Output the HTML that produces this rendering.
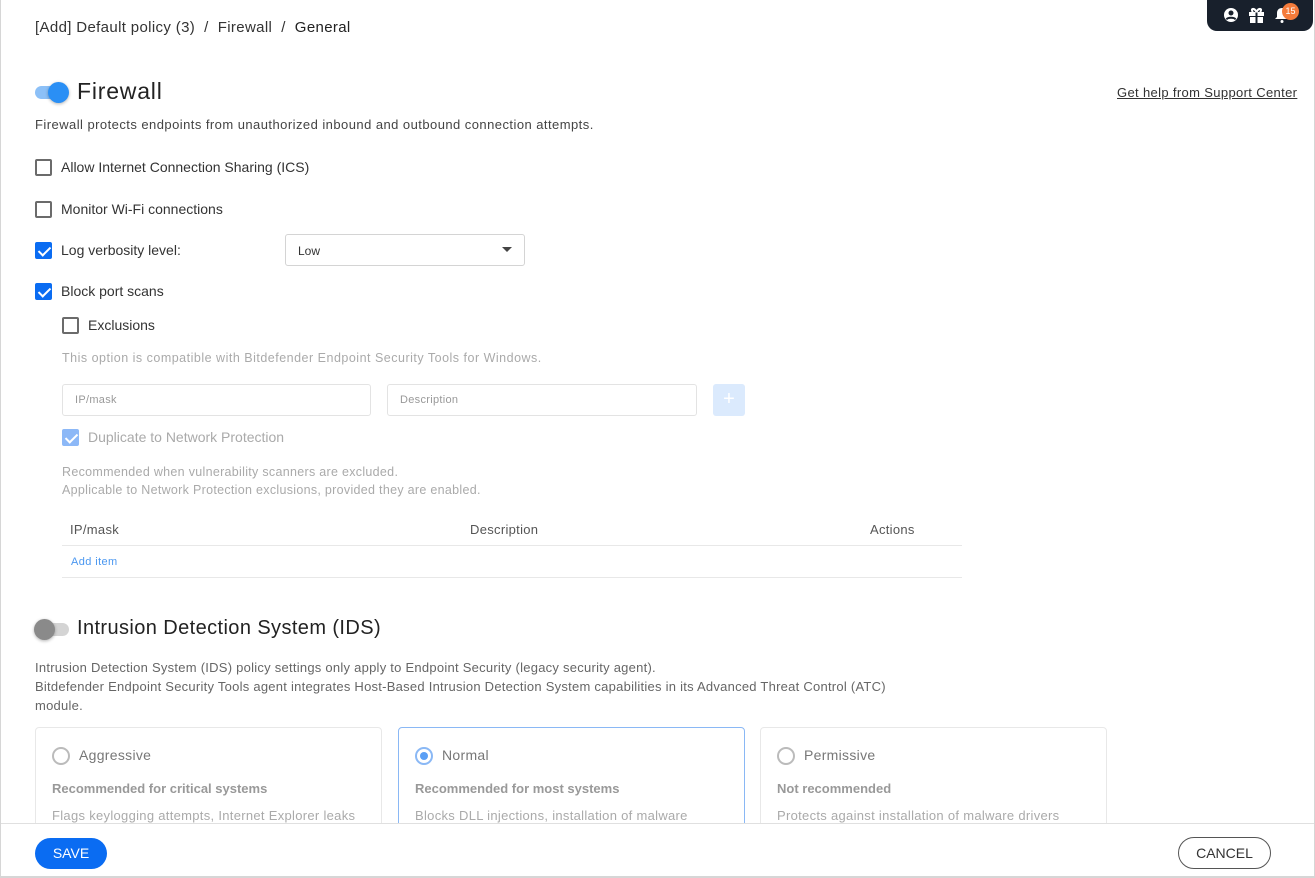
<!DOCTYPE html>
<html><head><meta charset="utf-8"><style>
*{box-sizing:border-box;margin:0;padding:0}
body{width:1315px;height:878px;overflow:hidden;background:#fff;font-family:"Liberation Sans",sans-serif;color:#333;position:relative}
.a{position:absolute;white-space:nowrap}
.frame{position:absolute;left:0;top:0;width:1315px;height:878px;border:1px solid #d6d6d6;border-top:none}
.cb{position:absolute;width:17px;height:17px;border:2px solid #6b6b6b;border-radius:2px;background:#fff}
.cb.on{background:#0a6cf2;border-color:#0a6cf2}
.cb.on::after{content:"";position:absolute;left:4px;top:0px;width:5px;height:10px;border:solid #fff;border-width:0 2px 2px 0;transform:rotate(45deg)}
.cb.dis{background:#8cb8f7;border-color:#8cb8f7}
.t14{font-size:14px;color:#333}
.g{font-size:12.5px;color:#aaa;letter-spacing:.5px}
.inp{position:absolute;height:32px;border:1px solid #e3e3e3;border-radius:3px;font-size:11px;color:#999;padding:9px 12px;letter-spacing:.3px}
.card{position:absolute;top:727px;width:347px;height:100px;border:1px solid #e8e8e8;border-radius:4px;overflow:hidden}
.rad{position:absolute;left:16px;top:19px;width:18px;height:18px;border:2px solid #bbb;border-radius:50%}
</style></head><body>
<div class="frame"></div>
<div class="a" style="left:35px;top:19px;font-size:15px;color:#333;letter-spacing:.35px">[Add] Default policy (3)&nbsp; /&nbsp; Firewall&nbsp; /&nbsp; <span style="color:#222">General</span></div>
<div class="a" style="left:1207px;top:0;width:106px;height:31px;background:#18202c;border-radius:0 0 10px 10px"></div>
<svg class="a" style="left:1223px;top:7px" width="16" height="16" viewBox="0 0 16 16"><circle cx="8" cy="8" r="7" fill="#fff"/><circle cx="8" cy="6" r="2.5" fill="#18202c"/><path d="M3.5 12.5c1-2.3 8-2.3 9 0" stroke="#18202c" stroke-width="2" fill="none"/></svg>
<svg class="a" style="left:1248px;top:7px" width="17" height="16" viewBox="0 0 17 16"><rect x="1" y="5" width="15" height="4" fill="#fff"/><rect x="2" y="10" width="13" height="6" fill="#fff"/><rect x="7.5" y="5" width="2" height="11" fill="#18202c"/><path d="M8.5 5C6 0 2 2 5 5M8.5 5c2.5-5 6.5-3 3.5 0" stroke="#fff" stroke-width="2" fill="none"/></svg>
<svg class="a" style="left:1275px;top:7px" width="14" height="16" viewBox="0 0 14 16"><path d="M7 1c3 0 5 2 5 5v4l2 2H0l2-2V6c0-3 2-5 5-5z" fill="#fff"/><circle cx="7" cy="14.5" r="1.5" fill="#fff"/></svg>
<div class="a" style="left:1282px;top:3px;width:17px;height:17px;border-radius:50%;background:#f47b3b;color:#fff;font-size:9px;text-align:center;line-height:17px">15</div>

<div class="a" style="left:35px;top:86px;width:33px;height:13px;border-radius:7px;background:#8cc0f7"></div>
<div class="a" style="left:48px;top:82px;width:21px;height:21px;border-radius:50%;background:#2a8ff5;box-shadow:0 1px 3px rgba(0,0,0,.3)"></div>
<div class="a" style="left:77px;top:78px;font-size:23px;color:#222;letter-spacing:.8px">Firewall</div>
<div class="a" style="left:1117px;top:85px;font-size:13px;color:#333;text-decoration:underline;letter-spacing:.35px">Get help from Support Center</div>
<div class="a" style="left:35px;top:117px;font-size:13px;color:#444;letter-spacing:.45px">Firewall protects endpoints from unauthorized inbound and outbound connection attempts.</div>

<div class="cb" style="left:35px;top:159px"></div><div class="a t14" style="left:61px;top:159px">Allow Internet Connection Sharing (ICS)</div>
<div class="cb" style="left:35px;top:201px"></div><div class="a t14" style="left:61px;top:201px">Monitor Wi-Fi connections</div>
<div class="cb on" style="left:35px;top:242px"></div><div class="a t14" style="left:61px;top:242px">Log verbosity level:</div>
<div class="a" style="left:285px;top:234px;width:240px;height:32px;border:1px solid #d4d4d4;border-radius:3px;font-size:12px;color:#333;padding:9px 12px">Low</div>
<div class="a" style="left:502px;top:247px;border:5px solid transparent;border-top:5px solid #444"></div>
<div class="cb on" style="left:35px;top:283px"></div><div class="a t14" style="left:61px;top:283px">Block port scans</div>
<div class="cb" style="left:62px;top:317px"></div><div class="a t14" style="left:88px;top:317px">Exclusions</div>
<div class="a g" style="left:62px;top:351px">This option is compatible with Bitdefender Endpoint Security Tools for Windows.</div>
<div class="inp" style="left:62px;top:384px;width:309px">IP/mask</div>
<div class="inp" style="left:387px;top:384px;width:310px">Description</div>
<div class="a" style="left:713px;top:384px;width:32px;height:32px;background:#dbeafd;border-radius:3px;color:#fff;font-size:20px;text-align:center;line-height:31px">+</div>
<div class="cb on dis" style="left:62px;top:429px"></div><div class="a" style="left:88px;top:429px;font-size:14px;color:#aaa">Duplicate to Network Protection</div>
<div class="a g" style="left:62px;top:463px;line-height:18px;letter-spacing:.3px">Recommended when vulnerability scanners are excluded.<br>Applicable to Network Protection exclusions, provided they are enabled.</div>
<div class="a" style="left:70px;top:522px;font-size:13px;color:#555;letter-spacing:.3px">IP/mask</div>
<div class="a" style="left:470px;top:522px;font-size:13px;color:#555;letter-spacing:.3px">Description</div>
<div class="a" style="left:870px;top:522px;font-size:13px;color:#555;letter-spacing:.3px">Actions</div>
<div class="a" style="left:62px;top:545px;width:900px;height:1px;background:#e8e8e8"></div>
<div class="a" style="left:71px;top:556px;font-size:11px;color:#4a97f0;letter-spacing:.4px">Add item</div>
<div class="a" style="left:62px;top:577px;width:900px;height:1px;background:#e8e8e8"></div>

<div class="a" style="left:35px;top:623px;width:34px;height:13px;border-radius:7px;background:#d4d4d4"></div>
<div class="a" style="left:34px;top:619px;width:21px;height:21px;border-radius:50%;background:#8a8a8a;box-shadow:0 1px 3px rgba(0,0,0,.3)"></div>
<div class="a" style="left:77px;top:617px;font-size:20px;color:#222;letter-spacing:.4px">Intrusion Detection System (IDS)</div>
<div class="a" style="left:35px;top:658px;font-size:13px;color:#666;line-height:19px;letter-spacing:.25px">Intrusion Detection System (IDS) policy settings only apply to Endpoint Security (legacy security agent).<br>Bitdefender Endpoint Security Tools agent integrates Host-Based Intrusion Detection System capabilities in its Advanced Threat Control (ATC)<br>module.</div>

<div class="card" style="left:35px"><div class="rad"></div><div class="a" style="left:43px;top:19px;font-size:14px;color:#777;letter-spacing:.3px">Aggressive</div><div class="a" style="left:16px;top:53px;font-size:13px;font-weight:bold;color:#999">Recommended for critical systems</div><div class="a" style="left:16px;top:80px;font-size:13px;color:#aaa;letter-spacing:.3px">Flags keylogging attempts, Internet Explorer leaks</div></div>
<div class="card" style="left:398px;border-color:#8ab8f5"><div class="rad" style="border-color:#8ab8f5"><div style="position:absolute;left:3px;top:3px;width:8px;height:8px;border-radius:50%;background:#5a9ff5"></div></div><div class="a" style="left:43px;top:19px;font-size:14px;color:#777;letter-spacing:.3px">Normal</div><div class="a" style="left:16px;top:53px;font-size:13px;font-weight:bold;color:#999">Recommended for most systems</div><div class="a" style="left:16px;top:80px;font-size:13px;color:#aaa;letter-spacing:.3px">Blocks DLL injections, installation of malware</div></div>
<div class="card" style="left:760px"><div class="rad"></div><div class="a" style="left:43px;top:19px;font-size:14px;color:#777;letter-spacing:.3px">Permissive</div><div class="a" style="left:16px;top:53px;font-size:13px;font-weight:bold;color:#999">Not recommended</div><div class="a" style="left:16px;top:80px;font-size:13px;color:#aaa;letter-spacing:.3px">Protects against installation of malware drivers</div></div>

<div class="a" style="left:1px;top:823px;width:1313px;height:55px;background:#fff;border-top:1px solid #e0e0e0"></div>
<div class="a" style="left:35px;top:838px;width:72px;height:31px;border-radius:16px;background:#0a6cf2;color:#fff;font-size:14px;text-align:center;line-height:31px">SAVE</div>
<div class="a" style="left:1178px;top:837px;width:93px;height:32px;border-radius:16px;border:1px solid #555;color:#333;font-size:14px;text-align:center;line-height:30px">CANCEL</div>
<div class="a" style="left:0;top:876px;width:1315px;height:2px;background:#d6d6d6"></div>
</body></html>
